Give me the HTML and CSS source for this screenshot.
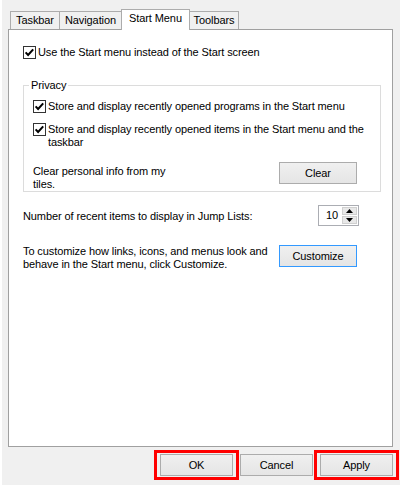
FILE: index.html
```html
<!DOCTYPE html>
<html>
<head>
<meta charset="utf-8">
<link rel="stylesheet" href="styles.css">
</head>
<body>
<div class="window">
  <div class="tabs">
    <div class="tab t-taskbar">Taskbar</div>
    <div class="tab t-nav">Navigation</div>
    <div class="tab active t-start">Start Menu</div>
    <div class="tab t-tool">Toolbars</div>
  </div>
  <div class="panel">
    <div class="check-row first">
      <svg class="cb" width="13" height="13" viewBox="0 0 13 13"><rect x="0.5" y="0.5" width="12" height="12" fill="#fff" stroke="#333"/><path d="M2.6 6.4 L5.1 9 L10.2 3.4" fill="none" stroke="#000" stroke-width="2"/></svg>
      <span>Use the Start menu instead of the Start screen</span>
    </div>
    <fieldset class="group">
      <legend>Privacy</legend>
      <div class="check-row r2">
        <svg class="cb" width="13" height="13" viewBox="0 0 13 13"><rect x="0.5" y="0.5" width="12" height="12" fill="#fff" stroke="#333"/><path d="M2.6 6.4 L5.1 9 L10.2 3.4" fill="none" stroke="#000" stroke-width="2"/></svg>
        <span>Store and display recently opened programs in the Start menu</span>
      </div>
      <div class="check-row r3">
        <svg class="cb" width="13" height="13" viewBox="0 0 13 13"><rect x="0.5" y="0.5" width="12" height="12" fill="#fff" stroke="#333"/><path d="M2.6 6.4 L5.1 9 L10.2 3.4" fill="none" stroke="#000" stroke-width="2"/></svg>
        <span>Store and display recently opened items in the Start menu and the<br>taskbar</span>
      </div>
      <div class="clear-row">
        <div class="clear-text">Clear personal info from my<br>tiles.</div>
        <button class="btn wide">Clear</button>
      </div>
    </fieldset>
    <div class="jump-row">
      <span>Number of recent items to display in Jump Lists:</span>
      <div class="spin">
        <span class="spin-val">10</span>
        <div class="spin-btns">
          <span class="sb"><svg width="7" height="4" viewBox="0 0 7 4"><polygon points="3.5,0 7,4 0,4" fill="#000"/></svg></span>
          <span class="sb"><svg width="7" height="4" viewBox="0 0 7 4"><polygon points="0,0 7,0 3.5,4" fill="#000"/></svg></span>
        </div>
      </div>
    </div>
    <div class="cust-row">
      <div class="cust-text">To customize how links, icons, and menus look and<br>behave in the Start menu, click Customize.</div>
      <button class="btn wide default">Customize</button>
    </div>
  </div>
  <div class="footer">
    <span class="hl"><button class="btn">OK</button></span>
    <button class="btn">Cancel</button>
    <span class="hl"><button class="btn">Apply</button></span>
  </div>
</div>
</body>
</html>
```
FILE: styles.css
```css
html, body {
  margin: 0;
  background: #fff;
}
body {
  font-family: "Liberation Sans", Arial, sans-serif;
  font-size: 11px;
  letter-spacing: -0.1px;
  color: #000;
}
.window {
  width: 398px;
  height: 485px;
  border-left: 2px solid #fff;
  border-right: 2px solid #fff;
  background: #f0f0f0;
  display: flex;
  flex-direction: column;
}
.tabs {
  display: flex;
  align-items: flex-end;
  height: 29px;
  padding-left: 8px;
  flex: none;
}
.tab {
  box-sizing: border-box;
  height: 18px;
  border: 1px solid #acacac;
  border-bottom: none;
  line-height: 17px;
  text-align: center;
  background: #f0f0f0;
  margin-left: -1px;
  white-space: nowrap;
}
.tab:first-child { margin-left: 0; }
.t-taskbar { width: 50px; }
.t-nav { width: 63px; }
.t-start { width: 69px; }
.t-tool { width: 50px; }
.tab.active {
  height: 21px;
  margin-bottom: -1px;
  background: #fff;
  position: relative;
}
.panel {
  box-sizing: border-box;
  height: 418px;
  margin: 0 7px 0 6px;
  border: 1px solid #a0a0a0;
  background: #fff;
  flex: none;
}
.check-row {
  display: flex;
  align-items: flex-start;
  gap: 2px;
  line-height: 13px;
}
.cb { flex: none; display: block; }
.first { margin: 16px 0 0 14px; }
.group {
  box-sizing: border-box;
  width: 358px;
  min-width: 0;
  margin: 20px 0 0 14px;
  padding: 0;
  border: 1px solid #dcdcdc;
}
.group legend {
  margin-left: 5px;
  padding: 0 2px;
  line-height: 13px;
}
.group .check-row { margin-left: 9px; }
.r2 { margin-top: 8px; }
.r3 { margin-top: 10px; }
.clear-row {
  display: flex;
  align-items: flex-start;
  margin: 13px 23px 0 9px;
}
.clear-text {
  margin-top: 3px;
  line-height: 13px;
}
.jump-row {
  display: flex;
  align-items: center;
  height: 21px;
  margin: 13px 33px 0 14px;
}
.spin {
  margin-left: auto;
  box-sizing: border-box;
  width: 41px;
  height: 21px;
  border: 1px solid #abadb3;
  display: flex;
}
.spin-val {
  flex: 1;
  padding-left: 7px;
  line-height: 19px;
}
.spin-btns {
  display: flex;
  flex-direction: column;
  width: 15px;
  margin: 1px 1px 1px 0;
  gap: 1px;
}
.sb {
  flex: 1;
  box-sizing: border-box;
  border: 1px solid #d0d0d0;
  background: #e8e8e8;
  display: flex;
  align-items: center;
  justify-content: center;
}
.sb svg { display: block; }
.cust-row {
  display: flex;
  align-items: flex-start;
  margin: 19px 35px 0 14px;
  line-height: 13px;
}
.btn {
  box-sizing: border-box;
  height: 22px;
  width: 73px;
  border: 1px solid #acacac;
  background: linear-gradient(#f0f0f0, #e5e5e5);
  font: inherit;
  letter-spacing: inherit;
  color: #000;
  padding: 0;
  line-height: 20px;
  border-radius: 0;
}
.btn.wide {
  width: 78px;
  margin-left: auto;
  flex: none;
}
.btn.default { border-color: #3399ff; }
.footer {
  display: flex;
  justify-content: flex-end;
  align-items: center;
  gap: 1px;
  padding: 3px 1px 0 0;
}
.hl {
  display: flex;
  border: 3px solid #ff0000;
  padding: 1px 3px;
}
```
